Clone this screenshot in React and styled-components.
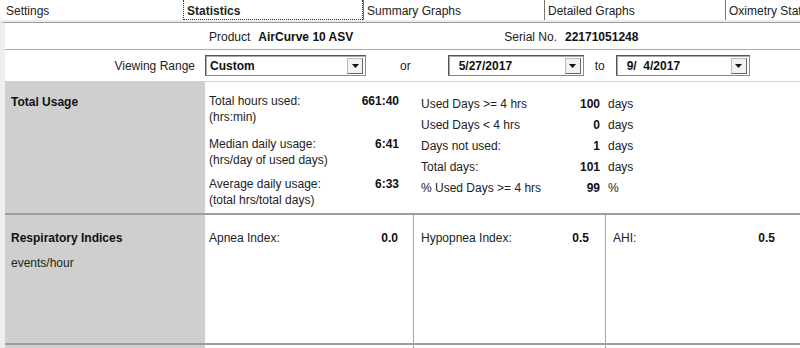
import React from 'react'
import styled, { createGlobalStyle } from 'styled-components'

const Global = createGlobalStyle`
body {
  margin: 0;
  background: #ffffff;
  font-family: "Liberation Sans", Arial, sans-serif;
  font-size: 12px;
  color: #222;
  overflow: hidden;
}
`

const TabBar = styled.div`
display: flex;
height: 20px;
border-bottom: 2px solid #ececec;
white-space: nowrap;
overflow: hidden;
`

const Tab = styled.div`
flex: 0 0 ${p => p.w}px;
box-sizing: border-box;
display: flex;
align-items: center;
padding: 2px 0 0 ${p => (p.first ? 6 : 3)}px;
border-left: ${p => (p.first ? 'none' : '1px solid #777')};
font-weight: ${p => (p.active ? 'bold' : 'normal')};
color: #222;
background: #fff;
${p => p.active && `
  border: 1px dotted #333;
  border-top: none;
`}
`

const Panel = styled.div`
border-top: 1px solid #999;
border-left: 5px solid #eeeeee;
`

const HeadRow = styled.div`
display: flex;
align-items: center;
height: 27px;
padding-top: 1px;
box-sizing: border-box;
border-bottom: 1px solid #aaa;
`

const Field = styled.span`
display: flex;
gap: 8px;
margin-left: ${p => p.ml}px;
`

const Strong = styled.b`
color: #111;
`

const RangeRow = styled.div`
display: flex;
align-items: center;
height: 31px;
border-bottom: 1px solid #d0d0d0;
`

const RangeLabel = styled.span`
width: 190px;
text-align: right;
`

const Word = styled.span`
margin-left: ${p => p.ml}px;
`

const Combo = styled.div`
margin-left: ${p => p.ml}px;
width: ${p => p.w}px;
height: 21px;
box-sizing: border-box;
border: 1px solid #888;
border-top-color: #555;
border-left-color: #555;
box-shadow: inset 1px 1px 0 #aaa;
background: #fff;
display: flex;
align-items: center;
justify-content: space-between;
padding-left: ${p => p.pl}px;
padding-right: 2px;
font-weight: bold;
color: #111;
white-space: pre;
`

const DropBtn = styled.div`
width: 16px;
height: 16px;
box-sizing: border-box;
border: 1px solid #bbb;
border-right-color: #666;
border-bottom-color: #666;
background: #f2f2f2;
display: flex;
align-items: center;
justify-content: center;
`

const Section = styled.div`
display: grid;
grid-template-columns: 200px ${p => p.cols};
height: ${p => p.h}px;
border-bottom: 2px solid #9c9c9c;
`

const SideHead = styled.div`
background: #cfcfcf;
padding: ${p => p.pt}px 6px 0 6px;
`

const SideTitle = styled.div`
font-weight: bold;
color: #111;
line-height: 16px;
`

const SideSub = styled.div`
line-height: 16px;
margin-top: 9px;
`

const UsageBody = styled.div`
display: flex;
padding: 11px 0 0 4px;
`

const UsageCol = styled.div`
width: 190px;
`

const UsageItem = styled.div`
display: flex;
justify-content: space-between;
line-height: 16px;
margin-bottom: ${p => p.mb}px;
`

const DaysCol = styled.div`
margin-left: 22px;
display: grid;
grid-template-columns: 150px 29px auto;
grid-auto-rows: 21px;
align-items: center;
`

const Num = styled.b`
text-align: right;
color: #111;
`

const Unit = styled.span`
padding-left: 8px;
`

const Cell = styled.div`
display: flex;
justify-content: space-between;
align-items: flex-start;
padding: 15px ${p => p.pr}px 0 ${p => p.pl}px;
line-height: 16px;
border-right: ${p => (p.last ? 'none' : '1px solid #a8a8a8')};
`

const Spark = () => (
  <svg width="7" height="4" viewBox="0 0 7 4">
    <path d="M0 0h7L3.5 4z" fill="#111" />
  </svg>
)

const tabs = [
  { label: 'Settings', w: 183 },
  { label: 'Statistics', w: 180, active: true },
  { label: 'Summary Graphs', w: 181 },
  { label: 'Detailed Graphs', w: 181 },
  { label: 'Oximetry Stat', w: 75 },
]

const usage = [
  ['Total hours used:', '(hrs:min)', '661:40', 11],
  ['Median daily usage:', '(hrs/day of used days)', '6:41', 8],
  ['Average daily usage:', '(total hrs/total days)', '6:33', 0],
]

const days = [
  ['Used Days >= 4 hrs', '100', 'days'],
  ['Used Days < 4 hrs', '0', 'days'],
  ['Days not used:', '1', 'days'],
  ['Total days:', '101', 'days'],
  ['% Used Days >= 4 hrs', '99', '%'],
]

const App = () => (
  <>
    <Global />
    <TabBar>
      {tabs.map((t, i) => (
        <Tab key={t.label} w={t.w} first={i === 0} active={t.active}>{t.label}</Tab>
      ))}
    </TabBar>
    <Panel>
      <HeadRow>
        <Field ml={204}>Product <Strong>AirCurve 10 ASV</Strong></Field>
        <Field ml={151}>Serial No. <Strong>22171051248</Strong></Field>
      </HeadRow>
      <RangeRow>
        <RangeLabel>Viewing Range</RangeLabel>
        <Combo ml={10} w={161} pl={4}>Custom<DropBtn><Spark /></DropBtn></Combo>
        <Word ml={34}>or</Word>
        <Combo ml={37} w={136} pl={10}>5/27/2017<DropBtn><Spark /></DropBtn></Combo>
        <Word ml={11}>to</Word>
        <Combo ml={11} w={134} pl={10}>{'9/  4/2017'}<DropBtn><Spark /></DropBtn></Combo>
      </RangeRow>
      <Section h={131} cols="1fr">
        <SideHead pt={12}><SideTitle>Total Usage</SideTitle></SideHead>
        <UsageBody>
          <UsageCol>
            {usage.map(([a, b, v, mb]) => (
              <UsageItem key={a} mb={mb}>
                <div>{a}<br />{b}</div>
                <Num>{v}</Num>
              </UsageItem>
            ))}
          </UsageCol>
          <DaysCol>
            {days.map(([l, n, u]) => (
              <React.Fragment key={l}>
                <span>{l}</span>
                <Num>{n}</Num>
                <Unit>{u}</Unit>
              </React.Fragment>
            ))}
          </DaysCol>
        </UsageBody>
      </Section>
      <Section h={128} cols="209px 192px 1fr">
        <SideHead pt={15}>
          <SideTitle>Respiratory Indices</SideTitle>
          <SideSub>events/hour</SideSub>
        </SideHead>
        <Cell pl={4} pr={15}><span>Apnea Index:</span><Num>0.0</Num></Cell>
        <Cell pl={7} pr={16}><span>Hypopnea Index:</span><Num>0.5</Num></Cell>
        <Cell pl={7} pr={25} last><span>AHI:</span><Num>0.5</Num></Cell>
      </Section>
      <Section h={20} cols="209px 192px 1fr">
        <SideHead pt={0} />
        <Cell pl={4} pr={15} />
        <Cell pl={7} pr={16} />
        <Cell pl={7} pr={25} last />
      </Section>
    </Panel>
  </>
)

export default App
